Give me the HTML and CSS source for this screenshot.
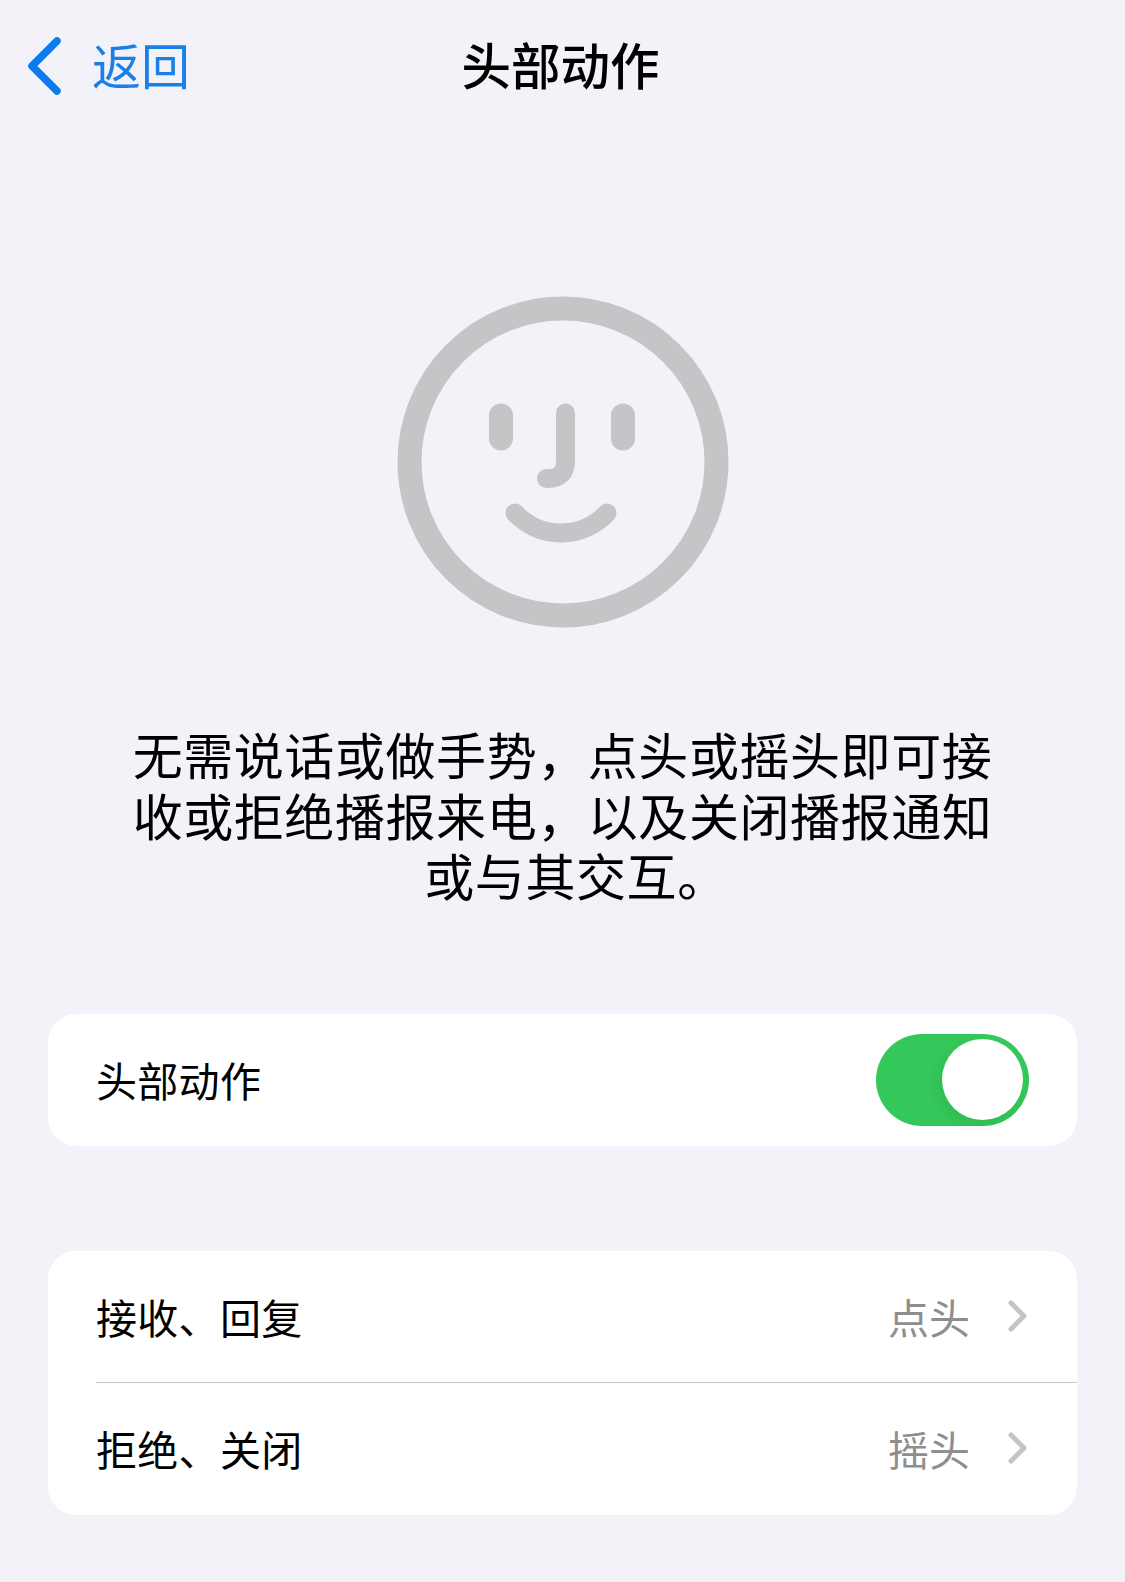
FILE: index.html
```html
<!DOCTYPE html>
<html lang="zh-CN">
<head>
    <meta charset="UTF-8">
    <meta name="viewport" content="width=device-width, initial-scale=1.0">
    <title>头部动作</title>
    <link rel="stylesheet" href="styles.css">
</head>
<body>
    <div class="page">
        <header class="nav">
            <a class="back">
                <svg class="back-icon" viewBox="0 0 36 58" aria-hidden="true">
                    <path d="M30 4 L5 29 L30 54" />
                </svg>
                <span>返回</span>
            </a>
            <h1 class="nav-title">头部动作</h1>
        </header>

        <div class="face-wrap">
            <svg class="face" viewBox="0 0 332 332" aria-hidden="true">
                <circle class="face-ring" cx="166" cy="166" r="153.5" />
                <rect class="face-part" x="92" y="107.500" width="24" height="47" rx="12" />
                <rect class="face-part" x="214" y="107.500" width="24" height="47" rx="12" />
                <path class="face-line" d="M168.500 117 V165 Q168.500 182.500 151 182.500 H149.500" />
                <path class="face-line" d="M118 217 A63 63 0 0 0 210 217" />
            </svg>
        </div>

        <p class="intro">无需说话或做手势，点头或摇头即可接<br>收或拒绝播报来电，以及关闭播报通知<br><span class="intro-last">或与其交互。</span></p>

        <section class="card card-toggle">
            <div class="row">
                <span class="row-label">头部动作</span>
                <div class="switch"><div class="switch-knob"></div></div>
            </div>
        </section>

        <section class="card card-list">
            <div class="row row-line">
                <span class="row-label">接收、回复</span>
                <span class="row-value">点头</span>
                <svg class="chevron" viewBox="0 0 20 32" aria-hidden="true"><path d="M3 3 L16 16 L3 29" /></svg>
            </div>
            <div class="row">
                <span class="row-label">拒绝、关闭</span>
                <span class="row-value">摇头</span>
                <svg class="chevron" viewBox="0 0 20 32" aria-hidden="true"><path d="M3 3 L16 16 L3 29" /></svg>
            </div>
        </section>
    </div>
</body>
</html>
```

FILE: styles.css
```css
html, body {
    margin: 0;
    padding: 0;
}

body {
    background-color: #f2f2f8;
    color: #000;
    font-family: "Noto Sans CJK SC", "Noto Sans", sans-serif;
}

.page {
    height: 1582px;
    overflow: hidden;
}

.nav {
    display: grid;
    grid-template-columns: 1fr auto 1fr;
    align-items: center;
    height: 126px;
}

.back {
    grid-column: 1;
    grid-row: 1;
    display: flex;
    align-items: center;
    gap: 29px;
    padding-left: 27px;
    color: #1a7fe8;
    font-size: 49px;
}

.back-icon {
    width: 36px;
    height: 58px;
    margin-top: 5px;
}

.back-icon path {
    fill: none;
    stroke: #0a7cf0;
    stroke-width: 7.500px;
    stroke-linecap: round;
    stroke-linejoin: round;
}

.nav-title {
    grid-column: 2;
    grid-row: 1;
    margin: 0 4px 0 0;
    font-size: 49.500px;
    font-weight: 500;
}

.face-wrap {
    display: flex;
    justify-content: center;
    padding-top: 170px;
}

.face {
    width: 332px;
    height: 332px;
}

.face-ring {
    fill: none;
    stroke: #c5c5c8;
    stroke-width: 24px;
}

.face-part {
    fill: #c5c5c8;
}

.face-line {
    fill: none;
    stroke: #c5c5c8;
    stroke-width: 19px;
    stroke-linecap: round;
}

.intro {
    margin: 95px 0 0;
    font-size: 50px;
    line-height: 60.500px;
    letter-spacing: 0.570px;
    text-align: center;
}

.intro-last {
    padding-left: 27px;
}

.card {
    margin: 0 48px;
    background-color: #fff;
    border-radius: 28px;
    overflow: hidden;
}

.card-toggle {
    margin-top: 109px;
}

.card-list {
    margin-top: 105px;
}

.row {
    position: relative;
    display: flex;
    align-items: center;
    height: 132px;
    padding-left: 48px;
    padding-right: 48px;
    font-size: 41px;
}

.row-line::after {
    content: "";
    position: absolute;
    left: 48px;
    right: 0;
    bottom: 0;
    height: 1px;
    background-color: #c6c6c8;
}

.row-label {
    flex: 1;
    margin-bottom: 2px;
    letter-spacing: 0.300px;
}

.row-value {
    margin-bottom: 2px;
    color: #8e8e8e;
}

.chevron {
    width: 20px;
    height: 32px;
    margin-left: 38px;
    margin-right: 1px;
    margin-bottom: 2px;
}

.chevron path {
    fill: none;
    stroke: #c4c4c7;
    stroke-width: 5px;
    stroke-linecap: round;
    stroke-linejoin: round;
}

.switch {
    position: relative;
    width: 153px;
    height: 92px;
    background-color: #34c759;
    border-radius: 46px;
}

.switch-knob {
    position: absolute;
    top: 5.500px;
    right: 6px;
    width: 81px;
    height: 81px;
    background-color: #fff;
    border-radius: 50%;
    box-shadow: -4px 6px 14px rgba(0, 0, 0, 0.06);
}
```
